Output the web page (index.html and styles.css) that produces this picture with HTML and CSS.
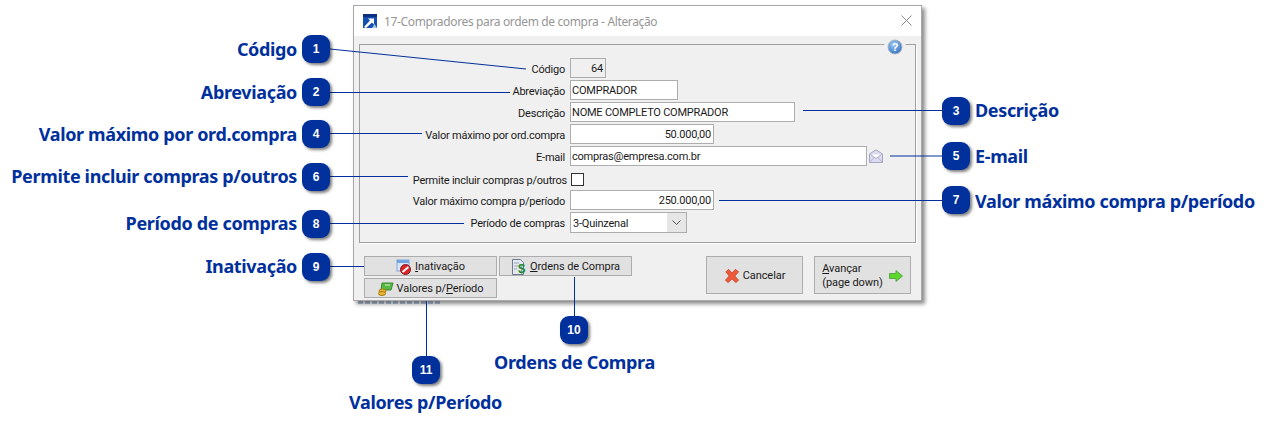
FILE: index.html
```html
<!DOCTYPE html>
<html lang="pt-BR">
<head>
<meta charset="utf-8">
<title>17-Compradores para ordem de compra</title>
<link rel="stylesheet" href="styles.css">
</head>
<body>
<main class="stage">
  <div class="behind"></div>
  <section class="window">
    <header class="titlebar">
      <svg class="app-icon" width="14" height="14" viewBox="0 0 14 14"><rect width="14" height="14" fill="#1450b0"/><rect width="14" height="3" fill="#0a2f80"/><path d="M1 13 7 6.500 5 4.500h6v6L9 8.500 3 14z" fill="#fff"/><path d="M9 14l2.500-4 2.500 4z" fill="#a8c4e8"/></svg>
      <span class="title">17-Compradores para ordem de compra - Alteração</span>
      <svg class="close" width="11" height="11" viewBox="0 0 11 11"><path d="M.5.500l10 10M10.500.500l-10 10" stroke="#8a8a8a" fill="none"/></svg>
    </header>
    <div class="body">
      <div class="group">
        <svg class="help" width="16" height="16" viewBox="0 0 16 16"><defs><radialGradient id="h" cx=".4" cy=".3" r=".8"><stop offset="0" stop-color="#9cc8f2"/><stop offset="1" stop-color="#2a6cc0"/></radialGradient></defs><circle cx="8" cy="8" r="7" fill="url(#h)" stroke="#a8b0bc"/><text x="8" y="12" class="help-q">?</text></svg>
        <div class="row"><label class="lbl">Código</label><div class="field f-code ro num">64</div></div>
        <div class="row"><label class="lbl">Abreviação</label><div class="field f-abr">COMPRADOR</div></div>
        <div class="row"><label class="lbl">Descrição</label><div class="field f-desc">NOME COMPLETO COMPRADOR</div></div>
        <div class="row"><label class="lbl">Valor máximo por ord.compra</label><div class="field f-val num">50.000,00</div></div>
        <div class="row"><label class="lbl">E-mail</label><div class="field f-mail">compras@empresa.com.br</div>
          <svg class="mail" width="14" height="14" viewBox="0 0 14 14"><path d="M.5 5 7 .8 13.500 5v8.500H.5z" fill="#dcdcf0" stroke="#a5a5c8"/><path d="M2.500 5.500h9L7 9z" fill="#fff"/><path d="M.5 5 7 9.500 13.500 5M.5 13.500 5.500 8M13.500 13.500 8.500 8" fill="none" stroke="#b4b4d0"/></svg>
        </div>
        <div class="row r-check"><label class="lbl lbl-check">Permite incluir compras p/outros</label><div class="check"></div></div>
        <div class="row"><label class="lbl">Valor máximo compra p/período</label><div class="field f-val num">250.000,00</div></div>
        <div class="row"><label class="lbl">Período de compras</label>
          <div class="field f-select"><span class="sel-text">3-Quinzenal</span><span class="sel-btn"><svg width="9" height="5" viewBox="0 0 9 5"><path d="M.5.500 4.500 4.500 8.500.5" fill="none" stroke="#555"/></svg></span></div>
        </div>
      </div>
      <div class="actions">
        <div class="small-btns">
          <button class="btn"><svg width="16" height="16" viewBox="0 0 16 16"><rect x="1" y="1" width="12" height="11" fill="#d4e6f8" stroke="#7fa8d8"/><rect x="1" y="1" width="12" height="3" fill="#6fa4e0"/><circle cx="9.500" cy="10.500" r="5" fill="#d8262a" stroke="#8a1418"/><path d="M6.500 13l6-5" stroke="#fff" stroke-width="1.800"/></svg><span><u>I</u>nativação</span></button>
          <button class="btn"><svg width="16" height="16" viewBox="0 0 16 16"><path d="M1.500.5h8l3 3v12h-11z" fill="#e4e8f0" stroke="#6f7a90"/><path d="M3 4h5M3 7h4M3 10h3" stroke="#9aa4b8"/><text x="10.500" y="14" class="dollar">$</text></svg><span><u>O</u>rdens de Compra</span></button>
          <button class="btn"><svg width="16" height="14" viewBox="0 0 16 14"><path d="M4 1h11l-2 7H3z" fill="#58b848" stroke="#3a8a30"/><path d="M7 3h5" stroke="#d8f0c0"/><ellipse cx="4.500" cy="9" rx="3.500" ry="2" fill="#e8b830" stroke="#a87c10"/><ellipse cx="4" cy="11.500" rx="3.500" ry="2" fill="#e8b830" stroke="#a87c10"/></svg><span>Valores p/<u>P</u>eríodo</span></button>
        </div>
        <div class="big-btns">
          <button class="btn btn-big"><svg width="16" height="16" viewBox="0 0 17 16"><path d="M2 3.500 5 1l3.500 4L12 1l3.500 2.500L11.500 8l4 4.500L12.500 15 8.500 11 4.500 15 1.500 12.500 5.500 8z" fill="#ec5a3a" stroke="#d04a30" stroke-linejoin="round"/></svg><span>Cancelar</span></button>
          <button class="btn btn-big btn-next"><span class="two-line"><u>A</u>vançar<br>(page down)</span><svg width="14" height="12" viewBox="0 0 14 12"><path d="M.5 3.500h6.500V.5L13.500 6 7 11.500v-3H.5z" fill="#5cd82c" stroke="#58a848"/></svg></button>
        </div>
      </div>
    </div>
  </section>

  <svg class="leaders" width="1272" height="431" viewBox="0 0 1272 431">
    <path d="M330 49 526 69M330 92.500H510M803 110.500H942M330 133.500H422M890 156H942M330 176.500H408M719 200.500H942M330 223.500H464M330 266.500H364M574.500 277V316M426.500 301V356"/>
  </svg>

  <span class="tag tag-l t1">Código</span><span class="badge b1">1</span>
  <span class="tag tag-l t2">Abreviação</span><span class="badge b2">2</span>
  <span class="badge b3">3</span><span class="tag t3">Descrição</span>
  <span class="tag tag-l t4">Valor máximo por ord.compra</span><span class="badge b4">4</span>
  <span class="badge b5">5</span><span class="tag t5">E-mail</span>
  <span class="tag tag-l t6">Permite incluir compras p/outros</span><span class="badge b6">6</span>
  <span class="badge b7">7</span><span class="tag t7">Valor máximo compra p/período</span>
  <span class="tag tag-l t8">Período de compras</span><span class="badge b8">8</span>
  <span class="tag tag-l t9">Inativação</span><span class="badge b9">9</span>
  <span class="badge b10">10</span><span class="tag t10">Ordens de Compra</span>
  <span class="badge b11">11</span><span class="tag t11">Valores p/Período</span>
</main>
</body>
</html>
```
FILE: styles.css
```css
* { box-sizing: border-box; }
html, body { margin: 0; padding: 0; background: #fff; }
.stage { position: relative; width: 1272px; height: 431px; overflow: hidden; font-family: "Roboto", sans-serif; }

.behind { position: absolute; left: 358px; top: 301px; width: 84px; height: 3px; background: repeating-linear-gradient(90deg, #b4c4dc 0 5px, #fff 5px 7px); }
.window { position: absolute; left: 353px; top: 5px; width: 569px; height: 296px; background: #f0f0f0; border: 1px solid #a8a8a8; box-shadow: 3px 3px 4px rgba(0,0,0,.45); display: flex; flex-direction: column; }
.titlebar { height: 30px; flex: none; background: #fff; display: flex; align-items: center; padding: 0 9px; }
.app-icon { margin-right: 7px; }
.title { font: 12px "Noto Sans", sans-serif; letter-spacing: -.36px; color: #969696; flex: 1; }
.close { margin-bottom: 2px; }
.body { flex: 1; padding: 8px 5px 0 5px; display: flex; flex-direction: column; }

.group { position: relative; height: 199px; border: 1px solid #a0a0a0; box-shadow: 1px 1px 0 #fff; padding-top: 13px; display: flex; flex-direction: column; gap: 2px; }
.help { position: absolute; right: 12px; top: -6px; background: #f0f0f0; box-shadow: 0 0 0 3px #f0f0f0; border-radius: 50%; }
.help-q { font: bold 11px "Liberation Sans", sans-serif; fill: #fff; text-anchor: middle; }

.row { display: flex; align-items: center; flex: none; height: 20px; font-size: 11px; letter-spacing: -.22px; color: #1a1a1a; }
.lbl { width: 205px; text-align: right; margin-right: 5px; padding-top: 2px; white-space: nowrap; }
.field { height: 20px; background: #fff; border: 1px solid #adadad; padding: 1px 2px 0 1px; line-height: 18px; white-space: nowrap; }
.ro { background: #f0f0f0; }
.num { text-align: right; }
.f-code { width: 36px; }
.f-abr { width: 108px; }
.f-desc { width: 225px; }
.f-val { width: 144px; }
.f-mail { width: 297px; }
.mail { margin-left: 2px; }
.r-check { padding-top: 3px; }
.lbl-check { width: 207px; margin-right: 4px; }
.check { width: 13px; height: 13px; background: #fff; border: 1px solid #333; }
.f-select { width: 117px; height: 21px; display: flex; padding: 2px 0 0 2px; line-height: 15px; background: #fff; }
.sel-text { flex: 1; padding-top: 1px; }
.sel-btn { width: 19px; margin-top: -2px; height: 19px; background: #e6e6e6; display: flex; align-items: center; justify-content: center; }

.actions { flex: 1; display: flex; justify-content: space-between; padding: 13px 5px 0 5px; }
.small-btns { display: grid; grid-template-columns: 133px 133px; grid-auto-rows: 20px; gap: 2px; align-content: start; }
.big-btns { display: flex; gap: 11px; }
.btn { display: flex; align-items: center; justify-content: center; gap: 3px; padding: 1px 0 0; background: #e1e1e1; border: 1px solid #adadad; font: 11px "Roboto", sans-serif; letter-spacing: -.08px; color: #1a1a1a; }
.btn svg { flex: none; }
.btn-big { width: 97px; height: 38px; }
.btn-next { gap: 6px; }
.two-line { text-align: left; line-height: 14px; }
.dollar { font: bold 13px "Liberation Sans", sans-serif; fill: #1f8a3a; text-anchor: middle; }

.leaders { position: absolute; left: 0; top: 0; pointer-events: none; }
.leaders path { fill: none; stroke: #00309c; stroke-width: 1; }

.badge { position: absolute; width: 28px; height: 28px; border-radius: 9px; background: #00309c; color: #fff; font: bold 12px/28px "Liberation Sans", sans-serif; text-align: center; box-shadow: 2px 2px 3px rgba(0,0,0,.5); }
.tag { position: absolute; font: bold 18px/24px "Noto Sans", sans-serif; letter-spacing: -.35px; color: #00309c; white-space: nowrap; }
.tag-l { right: 975px; }

.b1 { left: 302px; top: 35px; } .t1 { top: 37px; }
.b2 { left: 302px; top: 78px; } .t2 { top: 80px; }
.b3 { left: 942px; top: 97px; } .t3 { left: 975px; top: 98px; }
.b4 { left: 302px; top: 120px; } .t4 { top: 122px; }
.b5 { left: 942px; top: 142px; } .t5 { left: 975px; top: 144px; }
.b6 { left: 302px; top: 163px; } .t6 { top: 164px; }
.b7 { left: 942px; top: 186px; } .t7 { left: 975px; top: 189px; }
.b8 { left: 302px; top: 210px; } .t8 { top: 211px; }
.b9 { left: 302px; top: 253px; } .t9 { top: 254px; }
.b10 { left: 560px; top: 316px; } .t10 { left: 494px; top: 350px; }
.b11 { left: 412px; top: 356px; } .t11 { left: 349px; top: 390px; }
```
